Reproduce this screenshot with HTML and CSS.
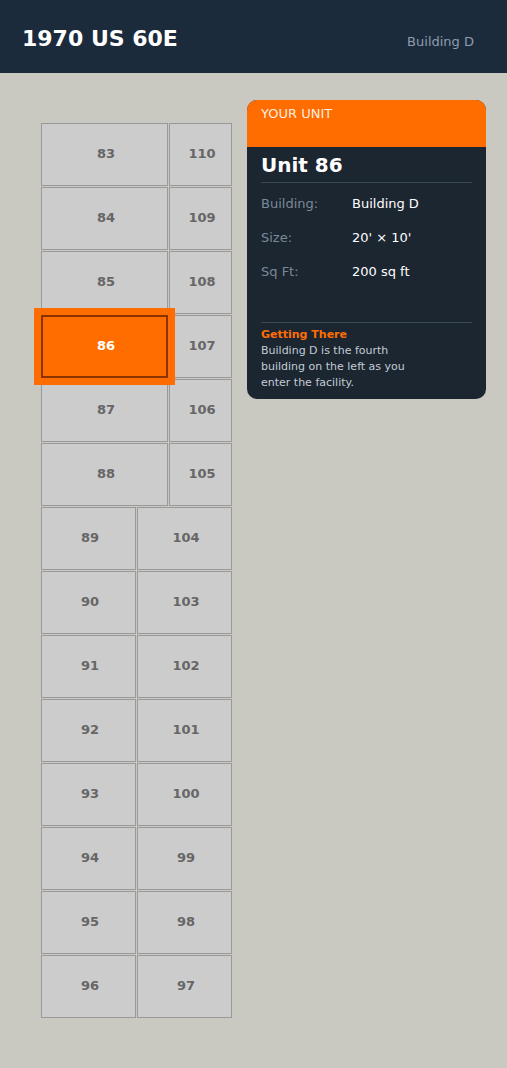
FILE: index.html
```html
<!DOCTYPE html>
<html lang="en">
<head>
<meta charset="utf-8">
<title>1970 US 60E – Unit 86</title>
<link rel="stylesheet" href="styles.css">
</head>
<body>
<header class="topbar">
  <h1 class="title">1970 US 60E</h1>
  <span class="bldg">Building D</span>
</header>
<main class="main">
  <div class="plan">
    <div class="row"><div class="cell wide">83</div><div class="cell narrow">110</div></div>
    <div class="row"><div class="cell wide">84</div><div class="cell narrow">109</div></div>
    <div class="row"><div class="cell wide">85</div><div class="cell narrow">108</div></div>
    <div class="row"><div class="cell wide active">86</div><div class="cell narrow">107</div></div>
    <div class="row"><div class="cell wide">87</div><div class="cell narrow">106</div></div>
    <div class="row"><div class="cell wide">88</div><div class="cell narrow">105</div></div>
    <div class="row"><div class="cell half">89</div><div class="cell half">104</div></div>
    <div class="row"><div class="cell half">90</div><div class="cell half">103</div></div>
    <div class="row"><div class="cell half">91</div><div class="cell half">102</div></div>
    <div class="row"><div class="cell half">92</div><div class="cell half">101</div></div>
    <div class="row"><div class="cell half">93</div><div class="cell half">100</div></div>
    <div class="row"><div class="cell half">94</div><div class="cell half">99</div></div>
    <div class="row"><div class="cell half">95</div><div class="cell half">98</div></div>
    <div class="row"><div class="cell half">96</div><div class="cell half">97</div></div>
  </div>
  <aside class="card">
    <div class="card-head">YOUR UNIT</div>
    <div class="card-body">
      <h2 class="unit">Unit 86</h2>
      <div class="facts">
        <div class="fact"><span class="label">Building:</span><span class="value">Building D</span></div>
        <div class="fact"><span class="label">Size:</span><span class="value">20' × 10'</span></div>
        <div class="fact"><span class="label">Sq Ft:</span><span class="value">200 sq ft</span></div>
      </div>
      <div class="extra">
        <div class="extra-title">Getting There</div>
        <p class="extra-text">Building D is the fourth building on the left as you enter the facility.</p>
      </div>
    </div>
  </aside>
</main>
</body>
</html>
```
FILE: styles.css
```css
* { box-sizing: border-box; }
html, body {
  margin: 0;
  padding: 0;
}
body {
  background: #c9c9c1;
  font-family: "DejaVu Sans", sans-serif;
  min-height: 1068px;
}
.topbar {
  height: 73px;
  background: #1c2b3c;
  display: flex;
  align-items: baseline;
  justify-content: space-between;
  padding: 26px 33px 0 22px;
}
.title {
  margin: 0;
  font-size: 22px;
  font-weight: bold;
  color: #ffffff;
}
.bldg {
  font-size: 13px;
  color: #8e9cad;
}
.main {
  display: flex;
  align-items: flex-start;
  gap: 15px;
  padding: 27px 21px 0 41px;
}
.plan {
  display: flex;
  flex-direction: column;
  gap: 1px;
  width: 191px;
  margin-top: 23px;
}
.row {
  display: flex;
  gap: 1px;
}
.cell {
  height: 63px;
  border: 1px solid #999999;
  background: #cccccc;
  color: #666666;
  font-size: 13px;
  font-weight: bold;
  display: flex;
  align-items: center;
  justify-content: center;
  padding: 0 0 2px 3px;
}
.wide { width: 127px; }
.narrow { width: 63px; }
.half { width: 95px; }
.active {
  position: relative;
  z-index: 2;
  background: #ff6d00;
  border: 2px solid #8a3300;
  color: #ffffff;
  box-shadow: 0 0 0 7px #ff6d00;
}
.card {
  width: 239px;
  border-radius: 10px;
  overflow: hidden;
  background: #1c2631;
}
.card-head {
  height: 47px;
  background: #ff6d00;
  color: rgba(255, 255, 255, 0.9);
  font-size: 13px;
  padding: 6px 14px 0;
}
.card-body {
  padding: 0 14px 8px;
}
.unit {
  margin: 0;
  font-size: 20px;
  font-weight: bold;
  color: #ffffff;
  padding: 6px 0 5px;
  border-bottom: 1px solid #3a4755;
}
.facts {
  padding-top: 4px;
}
.fact {
  display: flex;
  padding: 9px 0;
  line-height: 16px;
  font-size: 13px;
}
.label {
  width: 91px;
  color: #7b8898;
}
.value {
  color: #ffffff;
}
.extra {
  margin-top: 33px;
  border-top: 1px solid #3a4755;
  padding-top: 4px;
}
.extra-title {
  font-size: 11px;
  line-height: 16px;
  font-weight: bold;
  color: #ff6d00;
}
.extra-text {
  margin: 0;
  max-width: 160px;
  font-size: 11px;
  line-height: 16px;
  color: #c3cbd5;
}
```
